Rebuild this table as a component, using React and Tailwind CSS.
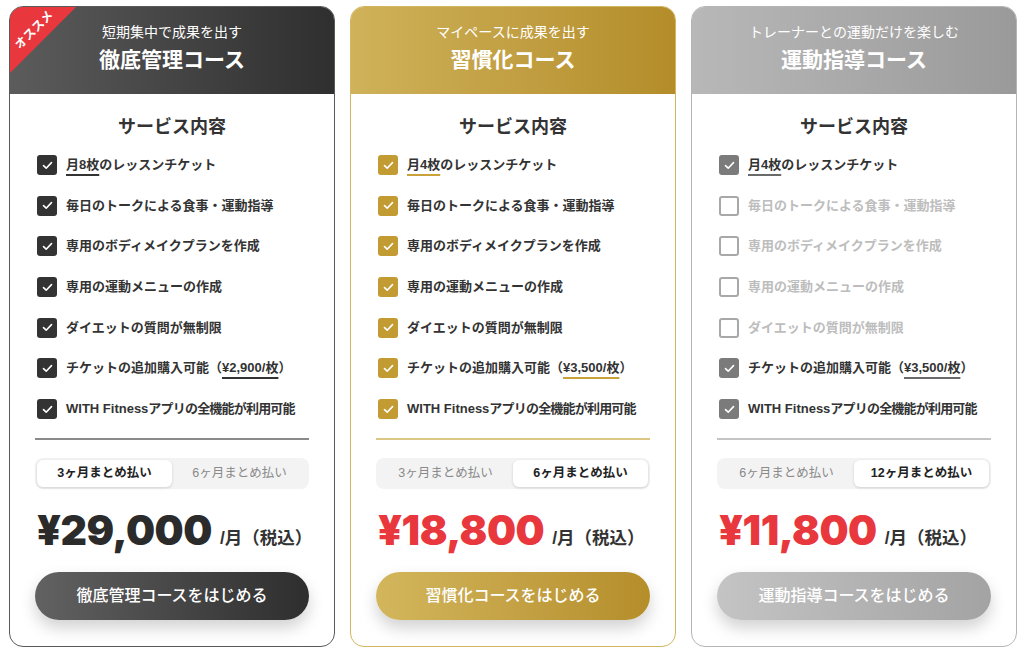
import React from "react";

const FONT = { fontFamily: '"Liberation Sans", "Noto Sans CJK JP", "Noto Sans", sans-serif' };

function Check({ on, color }) {
  if (!on) {
    return <span className="w-[20px] h-[20px] shrink-0 rounded-[3px] border-2 border-[#a8a8a8] bg-white" />;
  }
  return (
    <span className={`w-[20px] h-[20px] shrink-0 rounded-[3px] flex items-center justify-center ${color}`}>
      <svg width="11" height="9" viewBox="0 0 11 9" fill="none">
        <path d="M1.5 4.6 L4.2 7.2 L9.5 1.6" stroke="white" strokeWidth="1.6" strokeLinecap="round" strokeLinejoin="round" />
      </svg>
    </span>
  );
}

const plans = [
  {
    sub: "短期集中で成果を出す",
    title: "徹底管理コース",
    border: "border-[#5a5a5a]",
    header: "bg-gradient-to-r from-[#5c5c5c] to-[#2f2f2f]",
    box: "bg-[#333333]",
    underline: "decoration-[#333333]",
    divider: "bg-[#8a8a8a]",
    tickets: "月8枚",
    extra: "¥2,900/枚",
    enabled: [true, true, true, true, true, true, true],
    tabs: ["3ヶ月まとめ払い", "6ヶ月まとめ払い"],
    active: 0,
    price: "¥29,000",
    priceColor: "text-[#2b2b2b]",
    button: "bg-gradient-to-r from-[#626262] to-[#2e2e2e]",
    cta: "徹底管理コースをはじめる",
    ribbon: true,
  },
  {
    sub: "マイペースに成果を出す",
    title: "習慣化コース",
    border: "border-[#d3b662]",
    header: "bg-gradient-to-r from-[#cfb259] to-[#b48d29]",
    box: "bg-[#c39b33]",
    underline: "decoration-[#c9a23a]",
    divider: "bg-[#dcc684]",
    tickets: "月4枚",
    extra: "¥3,500/枚",
    enabled: [true, true, true, true, true, true, true],
    tabs: ["3ヶ月まとめ払い", "6ヶ月まとめ払い"],
    active: 1,
    price: "¥18,800",
    priceColor: "text-[#e8383d]",
    button: "bg-gradient-to-r from-[#d3b65c] to-[#b58e2a]",
    cta: "習慣化コースをはじめる",
  },
  {
    sub: "トレーナーとの運動だけを楽しむ",
    title: "運動指導コース",
    border: "border-[#b5b5b5]",
    header: "bg-gradient-to-r from-[#b8b8b8] to-[#9a9a9a]",
    box: "bg-[#7b7b7b]",
    underline: "decoration-[#6a6a6a]",
    divider: "bg-[#c4c4c4]",
    tickets: "月4枚",
    extra: "¥3,500/枚",
    enabled: [true, false, false, false, false, true, true],
    tabs: ["6ヶ月まとめ払い", "12ヶ月まとめ払い"],
    active: 1,
    price: "¥11,800",
    priceColor: "text-[#e8383d]",
    button: "bg-gradient-to-r from-[#c4c4c4] to-[#a3a3a3]",
    cta: "運動指導コースをはじめる",
  },
];

function Card({ p }) {
  const items = [
    <>
      <span className={`underline decoration-2 underline-offset-[5px] ${p.underline}`}>{p.tickets}</span>のレッスンチケット
    </>,
    "毎日のトークによる食事・運動指導",
    "専用のボディメイクプランを作成",
    "専用の運動メニューの作成",
    "ダイエットの質問が無制限",
    <>
      チケットの追加購入可能（
      <span className={`underline decoration-2 underline-offset-[5px] ${p.underline}`}>{p.extra}</span>）
    </>,
    <>
      WITH Fitness<span className="tracking-[-0.8px]">アプリの全機能が利用可能</span>
    </>,
  ];
  return (
    <div className={`relative w-[326px] h-[641px] shrink-0 rounded-[14px] border ${p.border} bg-white overflow-hidden flex flex-col`}>
      <div className={`h-[87px] shrink-0 flex flex-col items-center justify-center text-white ${p.header}`}>
        <div className="text-[14px] leading-[20px] mt-[-4px]">{p.sub}</div>
        <div className="text-[21px] leading-[30px] font-bold mt-[3px]">{p.title}</div>
      </div>
      {p.ribbon && (
        <>
          <div className="absolute left-0 top-0 w-[66px] h-[66px] bg-[#e8383d] [clip-path:polygon(0_0,100%_0,0_100%)]" />
          <div className="absolute left-[-4px] top-[16px] w-[56px] text-center text-white text-[12px] font-bold leading-[14px] rotate-[-45deg]">
            オススメ
          </div>
        </>
      )}
      <div className="flex-1 flex flex-col px-[25px]">
        <div className="text-center text-[18px] font-bold text-[#333] leading-[26px] mt-[20px]">サービス内容</div>
        <ul className="mt-[15px] flex flex-col gap-[20.7px] pl-[2px]">
          {items.map((it, i) => (
            <li key={i} className="flex items-center gap-[9px] h-[20px]">
              <Check on={p.enabled[i]} color={p.box} />
              <span className={`text-[13px] font-bold leading-[20px] whitespace-nowrap ${p.enabled[i] ? "text-[#333]" : "text-[#bdbdbd]"}`}>
                {it}
              </span>
            </li>
          ))}
        </ul>
        <div className={`h-[2px] mt-[19px] ${p.divider}`} />
        <div className="mt-[18px] h-[31px] rounded-[8px] bg-[#f3f3f3] flex p-[2px]">
          {p.tabs.map((t, i) => (
            <div
              key={i}
              className={`flex-1 flex items-center justify-center text-[12.5px] rounded-[6px] ${
                i === p.active ? "bg-white font-bold text-[#222] shadow-[0_1px_3px_rgba(0,0,0,0.15)]" : "text-[#8a8a8a]"
              }`}
            >
              {t}
            </div>
          ))}
        </div>
        <div className="mt-[19px] flex items-end pl-[2px] h-[44px]">
          <span
            className={`text-[41px] leading-[44px] font-black tracking-[-0.5px] ${p.priceColor}`}
            style={{ fontFamily: 'Inter, "Liberation Sans", sans-serif' }}
          >
            {p.price}
          </span>
          <span className="text-[17.5px] font-bold text-[#333] ml-[8px] mb-[3px] leading-[22px]">/月（税込）</span>
        </div>
        <div
          className={`mt-[20px] h-[48px] rounded-full flex items-center justify-center text-white text-[16px] font-medium shadow-[0_8px_16px_rgba(0,0,0,0.18)] ${p.button}`}
        >
          {p.cta}
        </div>
      </div>
    </div>
  );
}

export default function App() {
  return (
    <div className="w-[1024px] h-[657px] bg-white flex gap-[15px] pl-[9px] pt-[6px]" style={FONT}>
      {plans.map((p, i) => (
        <Card key={i} p={p} />
      ))}
    </div>
  );
}
